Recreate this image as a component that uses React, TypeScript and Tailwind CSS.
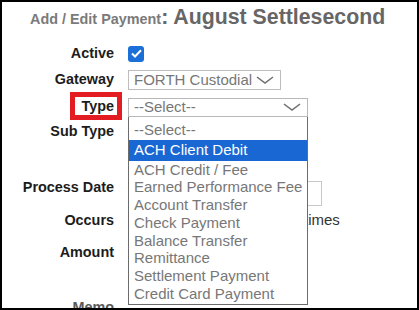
const labelCls =
  "w-[112px] shrink-0 text-right font-bold text-[14.4px] leading-[18px] text-[#1c1c1c]";

const options = [
  "ACH Credit / Fee",
  "Earned Performance Fee",
  "Account Transfer",
  "Check Payment",
  "Balance Transfer",
  "Remittance",
  "Settlement Payment",
  "Credit Card Payment",
];

const Chevron = () => (
  <svg width="18" height="8" viewBox="0 0 18 8" fill="none">
    <polyline points="1,1 9,7 17,1" stroke="#6e6e6e" strokeWidth="1.5" />
  </svg>
);

const App = () => {
  return (
    <div
      className="w-[419px] h-[310px] border-2 border-black bg-white overflow-hidden"
      style={{ fontFamily: '"Liberation Sans", Arial, sans-serif' }}
    >
      {/* Title */}
      <div className="pl-[28px] pt-[3px] leading-[24px] whitespace-nowrap font-bold">
        <span className="text-[14.4px] text-[#7a7a7a]">Add / Edit Payment</span>
        <span className="text-[21.3px] text-[#666666]">: August Settlesecond</span>
      </div>

      <div className="mt-[11px] flex flex-col">
        {/* Active */}
        <div className="flex h-[25px] items-center gap-[14px]">
          <div className={`${labelCls} mb-[4px]`}>Active</div>
          <span className="mb-[2px] flex h-[16px] w-[16px] items-center justify-center rounded-[3px] bg-[#1b6fd8]">
            <svg width="11" height="9" viewBox="0 0 11 9" fill="none">
              <polyline
                points="1,4.5 4,7.5 10,1.2"
                stroke="white"
                strokeWidth="2"
              />
            </svg>
          </span>
        </div>

        {/* Gateway */}
        <div className="flex h-[26px] items-center gap-[14px]">
          <div className={`${labelCls} mb-[3px]`}>Gateway</div>
          <div className="flex h-[20px] w-[153px] items-center justify-between border border-[#bdbdbd] pl-[5px] pr-[6px] text-[15px] text-[#777]">
            <span>FORTH Custodial</span>
            <Chevron />
          </div>
        </div>

        {/* Type */}
        <div className="flex h-[28px] items-center gap-[14px]">
          <div className={`${labelCls} mb-[3px]`}>
            <span className="relative">
              Type
              <span className="absolute -left-[11px] -right-[8px] -top-[6px] -bottom-[6px] border-[5px] border-[#e31b23]" />
            </span>
          </div>
          <div className="relative">
            <div className="flex h-[19px] w-[180px] items-center justify-between border border-[#b8b8b8] pl-[5px] pr-[6px] text-[15px] text-[#777]">
              <span>--Select--</span>
              <Chevron />
            </div>

            {/* open dropdown */}
            <div className="absolute left-0 top-full z-10 w-[180px] border-x border-b border-[#6b6b6b] bg-white pt-[4px] pb-[1px] text-[15px] text-[#777] whitespace-nowrap">
              <div className="h-[18px] pl-[5px] leading-[17px]">--Select--</div>
              <div className="mt-[1px] h-[21px] bg-[#1967d2] pl-[5px] leading-[20px] text-white">
                ACH Client Debit
              </div>
              {options.map((o) => (
                <div key={o} className="h-[17.8px] pl-[5px] leading-[17px]">
                  {o}
                </div>
              ))}
            </div>
          </div>
        </div>

        {/* Sub Type */}
        <div className="flex h-[24px] items-center gap-[14px]">
          <div className={`${labelCls} mb-[4px]`}>Sub Type</div>
        </div>

        <div className="h-[32px]" />

        {/* Process Date */}
        <div className="flex h-[32px] items-start gap-[14px]">
          <div className={`${labelCls} mt-[1px]`}>Process Date</div>
          <div className="mt-[4px] h-[25px] w-[194px] border border-[#c8c8c8]" />
        </div>

        {/* Occurs */}
        <div className="flex h-[25px] items-center gap-[14px]">
          <div className={`${labelCls} mb-[3px]`}>Occurs</div>
          <span className="mb-[3px] ml-[176px] text-[15px] leading-[18px] text-[#333]">times</span>
        </div>

        {/* Amount */}
        <div className="flex h-[40px] items-center gap-[14px]">
          <div className={`${labelCls} mb-[4px]`}>Amount</div>
        </div>

        {/* Memo */}
        <div className="flex h-[68px] items-center gap-[14px]">
          <div className={`${labelCls} mb-[2px] !text-[#5a5a5a]`}>Memo</div>
        </div>
      </div>
    </div>
  );
};

export default App;
